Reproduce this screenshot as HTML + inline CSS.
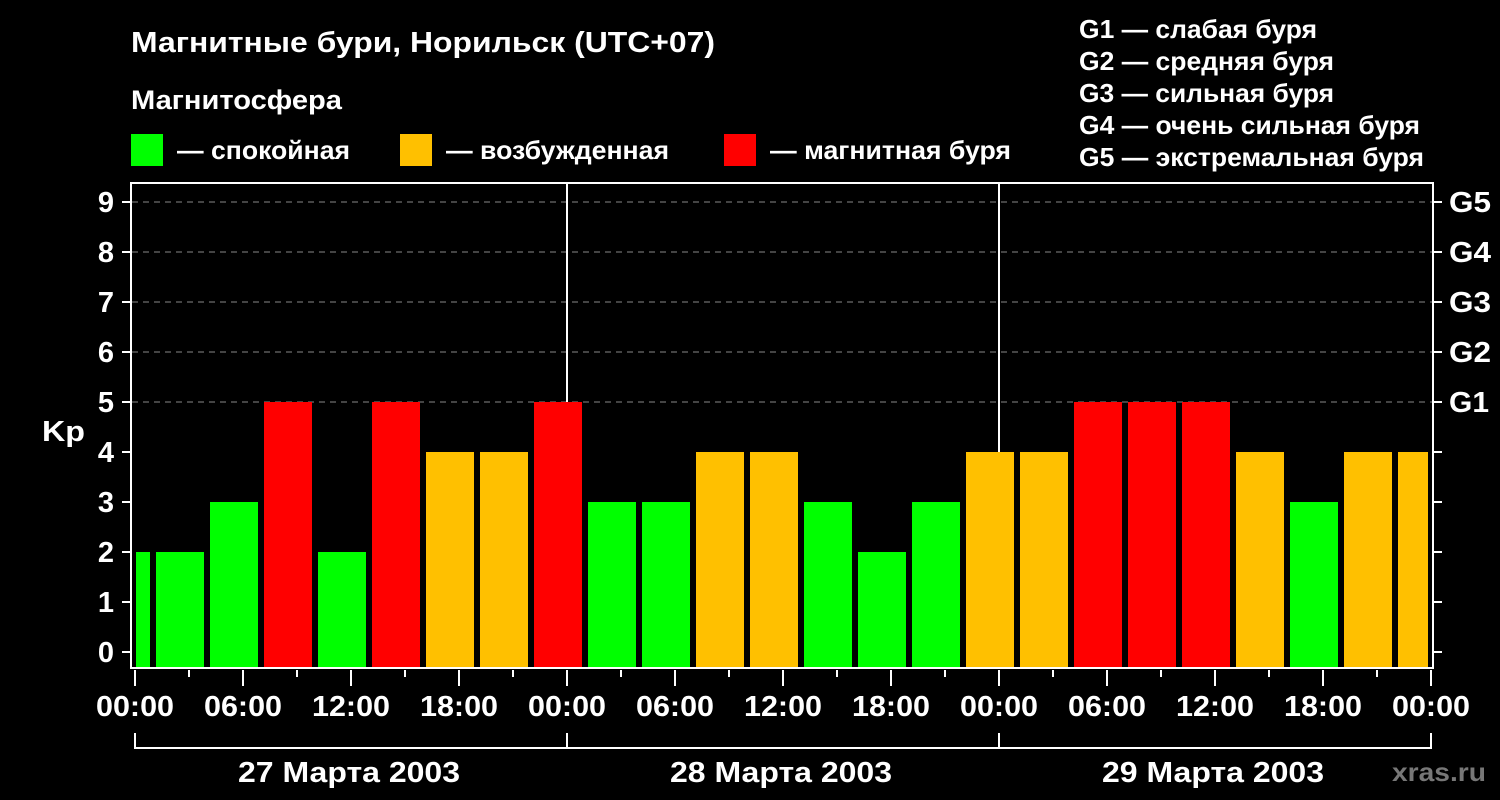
<!DOCTYPE html>
<html><head><meta charset="utf-8"><style>
html,body{margin:0;padding:0;background:#000;}
svg{display:block;}
text{font-family:"Liberation Sans",sans-serif;font-weight:bold;fill:#fff;}
</style></head><body>
<svg width="1500" height="800" xmlns="http://www.w3.org/2000/svg">
<rect width="1500" height="800" fill="#000"/>
<text x="131" y="52" font-size="29" textLength="584" lengthAdjust="spacingAndGlyphs">Магнитные бури, Норильск (UTC+07)</text>
<text x="131" y="109" font-size="27" textLength="211" lengthAdjust="spacingAndGlyphs">Магнитосфера</text>
<rect x="131" y="134" width="32" height="32" fill="#00ff00"/>
<text x="177" y="159" font-size="26" textLength="173" lengthAdjust="spacingAndGlyphs">— спокойная</text>
<rect x="400" y="134" width="32" height="32" fill="#ffc000"/>
<text x="446" y="159" font-size="26" textLength="223" lengthAdjust="spacingAndGlyphs">— возбужденная</text>
<rect x="724" y="134" width="32" height="32" fill="#ff0000"/>
<text x="770" y="159" font-size="26" textLength="241" lengthAdjust="spacingAndGlyphs">— магнитная буря</text>
<g font-size="26" lengthAdjust="spacingAndGlyphs">
<text x="1079" y="38" textLength="238" lengthAdjust="spacingAndGlyphs">G1 — слабая буря</text>
<text x="1079" y="70" textLength="255" lengthAdjust="spacingAndGlyphs">G2 — средняя буря</text>
<text x="1079" y="102" textLength="255" lengthAdjust="spacingAndGlyphs">G3 — сильная буря</text>
<text x="1079" y="134" textLength="341" lengthAdjust="spacingAndGlyphs">G4 — очень сильная буря</text>
<text x="1079" y="166" textLength="345" lengthAdjust="spacingAndGlyphs">G5 — экстремальная буря</text>
</g>
<g stroke="#888" stroke-width="1" stroke-dasharray="6,5">
<line x1="132" y1="202" x2="1432" y2="202"/><line x1="132" y1="252" x2="1432" y2="252"/>
<line x1="132" y1="302" x2="1432" y2="302"/><line x1="132" y1="352" x2="1432" y2="352"/>
<line x1="132" y1="402" x2="1432" y2="402"/>
</g>
<g stroke="#fff" stroke-width="2">
<line x1="567" y1="183" x2="567" y2="668"/><line x1="999" y1="183" x2="999" y2="668"/>
</g>
<g>
<rect x="136" y="552" width="14" height="116" fill="#00ff00"/>
<rect x="156" y="552" width="48" height="116" fill="#00ff00"/>
<rect x="210" y="502" width="48" height="166" fill="#00ff00"/>
<rect x="264" y="402" width="48" height="266" fill="#ff0000"/>
<rect x="318" y="552" width="48" height="116" fill="#00ff00"/>
<rect x="372" y="402" width="48" height="266" fill="#ff0000"/>
<rect x="426" y="452" width="48" height="216" fill="#ffc000"/>
<rect x="480" y="452" width="48" height="216" fill="#ffc000"/>
<rect x="534" y="402" width="48" height="266" fill="#ff0000"/>
<rect x="588" y="502" width="48" height="166" fill="#00ff00"/>
<rect x="642" y="502" width="48" height="166" fill="#00ff00"/>
<rect x="696" y="452" width="48" height="216" fill="#ffc000"/>
<rect x="750" y="452" width="48" height="216" fill="#ffc000"/>
<rect x="804" y="502" width="48" height="166" fill="#00ff00"/>
<rect x="858" y="552" width="48" height="116" fill="#00ff00"/>
<rect x="912" y="502" width="48" height="166" fill="#00ff00"/>
<rect x="966" y="452" width="48" height="216" fill="#ffc000"/>
<rect x="1020" y="452" width="48" height="216" fill="#ffc000"/>
<rect x="1074" y="402" width="48" height="266" fill="#ff0000"/>
<rect x="1128" y="402" width="48" height="266" fill="#ff0000"/>
<rect x="1182" y="402" width="48" height="266" fill="#ff0000"/>
<rect x="1236" y="452" width="48" height="216" fill="#ffc000"/>
<rect x="1290" y="502" width="48" height="166" fill="#00ff00"/>
<rect x="1344" y="452" width="48" height="216" fill="#ffc000"/>
<rect x="1398" y="452" width="30" height="216" fill="#ffc000"/>
</g>
<g stroke="#fff" stroke-width="2" fill="none">
<line x1="131" y1="182" x2="131" y2="669"/>
<line x1="1433" y1="182" x2="1433" y2="669"/>
<line x1="130" y1="668" x2="1434" y2="668"/>
<line x1="130" y1="183" x2="1434" y2="183"/>
</g>
<g stroke="#fff" stroke-width="2">
<line x1="122" y1="202" x2="131" y2="202"/><line x1="122" y1="252" x2="131" y2="252"/>
<line x1="122" y1="302" x2="131" y2="302"/><line x1="122" y1="352" x2="131" y2="352"/>
<line x1="122" y1="402" x2="131" y2="402"/><line x1="122" y1="452" x2="131" y2="452"/>
<line x1="122" y1="502" x2="131" y2="502"/><line x1="122" y1="552" x2="131" y2="552"/>
<line x1="122" y1="602" x2="131" y2="602"/><line x1="122" y1="652" x2="131" y2="652"/>
<line x1="1433" y1="202" x2="1442" y2="202"/><line x1="1433" y1="252" x2="1442" y2="252"/>
<line x1="1433" y1="302" x2="1442" y2="302"/><line x1="1433" y1="352" x2="1442" y2="352"/>
<line x1="1433" y1="402" x2="1442" y2="402"/><line x1="1433" y1="452" x2="1442" y2="452"/>
<line x1="1433" y1="502" x2="1442" y2="502"/><line x1="1433" y1="552" x2="1442" y2="552"/>
<line x1="1433" y1="602" x2="1442" y2="602"/><line x1="1433" y1="652" x2="1442" y2="652"/>
</g>
<g stroke="#fff" stroke-width="2">
<line x1="135" y1="670" x2="135" y2="686"/><line x1="189" y1="670" x2="189" y2="677"/>
<line x1="243" y1="670" x2="243" y2="686"/><line x1="297" y1="670" x2="297" y2="677"/>
<line x1="351" y1="670" x2="351" y2="686"/><line x1="405" y1="670" x2="405" y2="677"/>
<line x1="459" y1="670" x2="459" y2="686"/><line x1="513" y1="670" x2="513" y2="677"/>
<line x1="567" y1="670" x2="567" y2="686"/><line x1="621" y1="670" x2="621" y2="677"/>
<line x1="675" y1="670" x2="675" y2="686"/><line x1="729" y1="670" x2="729" y2="677"/>
<line x1="783" y1="670" x2="783" y2="686"/><line x1="837" y1="670" x2="837" y2="677"/>
<line x1="891" y1="670" x2="891" y2="686"/><line x1="945" y1="670" x2="945" y2="677"/>
<line x1="999" y1="670" x2="999" y2="686"/><line x1="1053" y1="670" x2="1053" y2="677"/>
<line x1="1107" y1="670" x2="1107" y2="686"/><line x1="1161" y1="670" x2="1161" y2="677"/>
<line x1="1215" y1="670" x2="1215" y2="686"/><line x1="1269" y1="670" x2="1269" y2="677"/>
<line x1="1323" y1="670" x2="1323" y2="686"/><line x1="1377" y1="670" x2="1377" y2="677"/>
<line x1="1431" y1="670" x2="1431" y2="686"/>
</g>
<g stroke="#fff" stroke-width="2" fill="none">
<line x1="134" y1="748" x2="1432" y2="748"/>
<line x1="135" y1="733" x2="135" y2="749"/><line x1="567" y1="733" x2="567" y2="749"/>
<line x1="999" y1="733" x2="999" y2="749"/><line x1="1431" y1="733" x2="1431" y2="749"/>
</g>
<g font-size="29" text-anchor="end">
<text x="114" y="212">9</text><text x="114" y="262">8</text><text x="114" y="312">7</text>
<text x="114" y="362">6</text><text x="114" y="412">5</text><text x="114" y="462">4</text>
<text x="114" y="512">3</text><text x="114" y="562">2</text><text x="114" y="612">1</text>
<text x="114" y="662">0</text>
</g>
<text x="42" y="441" font-size="29" textLength="43" lengthAdjust="spacingAndGlyphs">Kp</text>
<g font-size="29">
<text x="1449" y="212" textLength="42" lengthAdjust="spacingAndGlyphs">G5</text>
<text x="1449" y="262" textLength="42" lengthAdjust="spacingAndGlyphs">G4</text>
<text x="1449" y="312" textLength="42" lengthAdjust="spacingAndGlyphs">G3</text>
<text x="1449" y="362" textLength="42" lengthAdjust="spacingAndGlyphs">G2</text>
<text x="1449" y="412" textLength="40" lengthAdjust="spacingAndGlyphs">G1</text>
</g>
<g font-size="29" text-anchor="middle">
<text x="135" y="716" textLength="78" lengthAdjust="spacingAndGlyphs">00:00</text>
<text x="243" y="716" textLength="78" lengthAdjust="spacingAndGlyphs">06:00</text>
<text x="351" y="716" textLength="78" lengthAdjust="spacingAndGlyphs">12:00</text>
<text x="459" y="716" textLength="78" lengthAdjust="spacingAndGlyphs">18:00</text>
<text x="567" y="716" textLength="78" lengthAdjust="spacingAndGlyphs">00:00</text>
<text x="675" y="716" textLength="78" lengthAdjust="spacingAndGlyphs">06:00</text>
<text x="783" y="716" textLength="78" lengthAdjust="spacingAndGlyphs">12:00</text>
<text x="891" y="716" textLength="78" lengthAdjust="spacingAndGlyphs">18:00</text>
<text x="999" y="716" textLength="78" lengthAdjust="spacingAndGlyphs">00:00</text>
<text x="1107" y="716" textLength="78" lengthAdjust="spacingAndGlyphs">06:00</text>
<text x="1215" y="716" textLength="78" lengthAdjust="spacingAndGlyphs">12:00</text>
<text x="1323" y="716" textLength="78" lengthAdjust="spacingAndGlyphs">18:00</text>
<text x="1431" y="716" textLength="78" lengthAdjust="spacingAndGlyphs">00:00</text>
<text x="349" y="782" textLength="222" lengthAdjust="spacingAndGlyphs">27 Марта 2003</text>
<text x="781" y="782" textLength="222" lengthAdjust="spacingAndGlyphs">28 Марта 2003</text>
<text x="1213" y="782" textLength="222" lengthAdjust="spacingAndGlyphs">29 Марта 2003</text>
</g>
<text x="1392" y="781" font-size="26" textLength="94" lengthAdjust="spacingAndGlyphs" style="fill:#777">xras.ru</text>
</svg>
</body></html>
